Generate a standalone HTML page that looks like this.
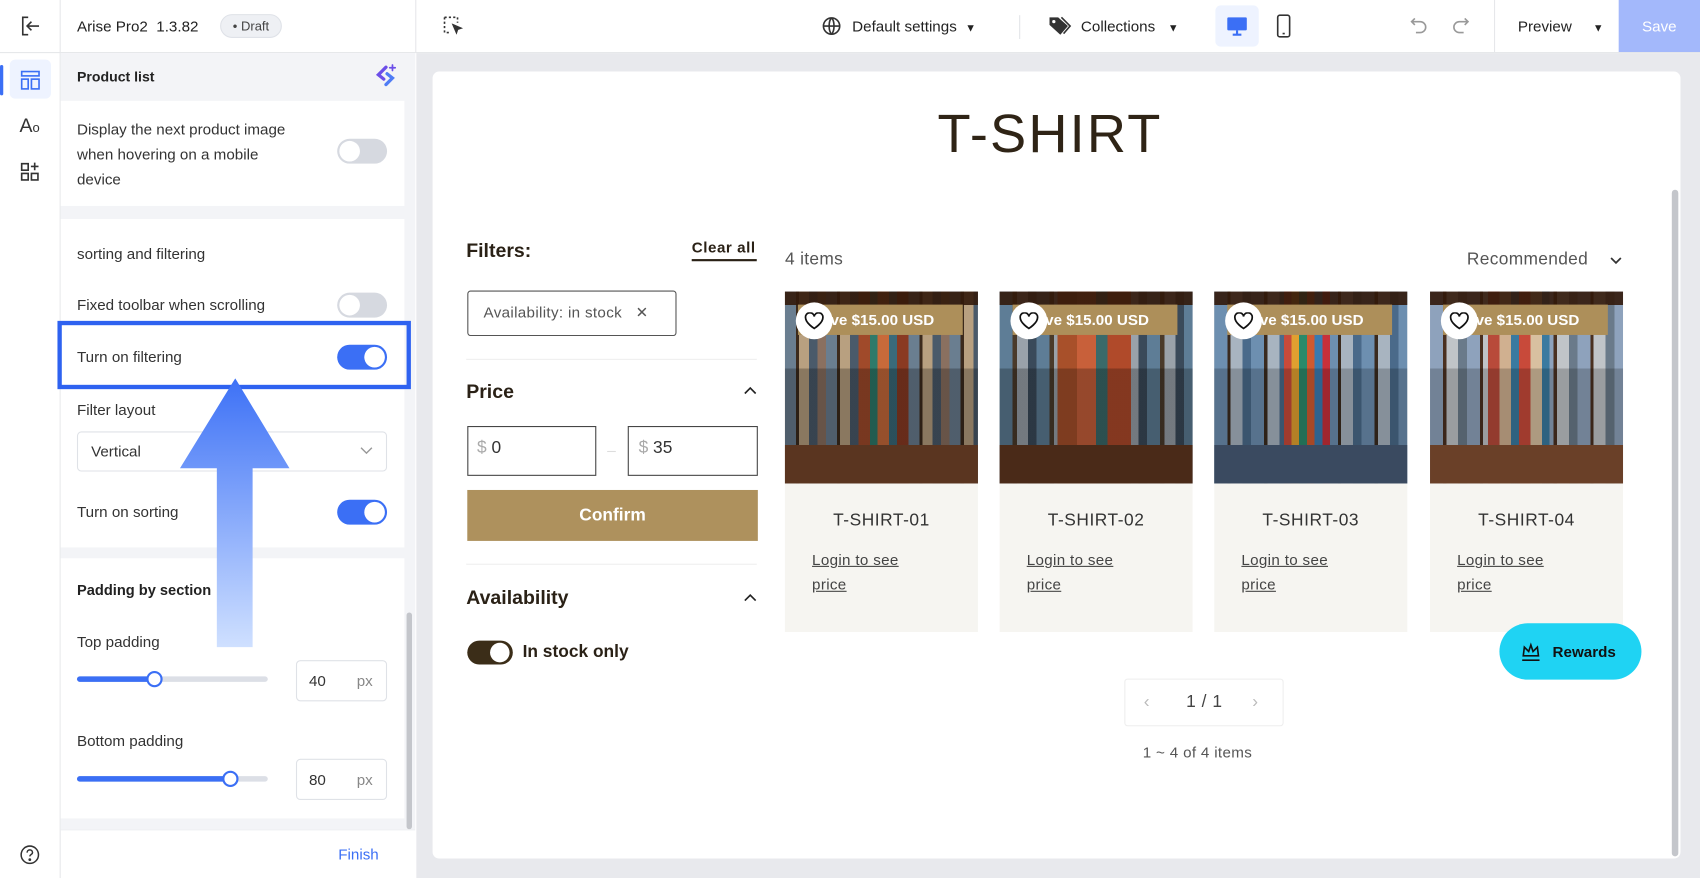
<!DOCTYPE html>
<html><head><meta charset="utf-8"><style>
*{box-sizing:border-box;margin:0;padding:0}
html,body{width:1700px;height:878px;overflow:hidden;background:#fff;font-family:"Liberation Sans",sans-serif}
#w{position:absolute;left:0;top:0;width:1568px;height:810px;transform:scale(1.08418,1.0840);transform-origin:0 0;background:#fff}
.a{position:absolute}
.t{position:absolute;white-space:nowrap;color:#2b2b2b;font-size:14px;line-height:1}
.tog{position:absolute;width:46px;height:23px;border-radius:12px;background:#d6d9e0}
.tog::after{content:"";position:absolute;left:2px;top:2px;width:19px;height:19px;border-radius:50%;background:#fff}
.tog.on{background:#3b6ff5}.tog.on::after{left:25px}
.card{position:absolute;background:#f6f5f1;width:178px;top:269px;height:314px}
.img{position:absolute;left:0;top:0;width:178px;height:177px}
.badge{position:absolute;left:12px;top:12px;width:152px;height:28px;background:#ad8f5a;color:#fff;font-weight:bold;font-size:14px;line-height:28px;padding-left:30px}
.heart{position:absolute;left:10px;top:10px;width:34px;height:34px;border-radius:50%;background:#fff}
.heart svg{position:absolute;left:8px;top:9px}
.ct{position:absolute;top:203px;width:178px;text-align:center;font-size:16px;color:#333;letter-spacing:.5px}
.lg{position:absolute;left:25px;top:236px;font-size:14px;color:#444;text-decoration:underline;line-height:23px;letter-spacing:.3px}
</style></head><body><div id="w">
<div class="a" style="left:0;top:48px;width:1568px;height:1px;background:#e6e7ea"></div>
<div class="a" style="left:55px;top:0;width:1px;height:810px;background:#e6e7ea"></div>
<div class="a" style="left:383px;top:0;width:1px;height:48px;background:#e6e7ea"></div>
<svg class="a" style="left:18px;top:14px" width="20" height="20" viewBox="0 0 20 20" fill="none" stroke="#333" stroke-width="1.5"><path d="M8 2H3v16h5M7 10h11M11 6l-4 4 4 4"/></svg>
<div class="t" style="left:71px;top:17px;font-size:14px;color:#222">Arise Pro2&nbsp; 1.3.82</div>
<div class="a" style="left:203px;top:13px;width:57px;height:22px;border-radius:11px;background:#eef0f4;border:1px solid #dfe2e8;font-size:12px;color:#444;line-height:20px;text-align:center">• Draft</div>
<svg class="a" style="left:408px;top:14px" width="20" height="20" viewBox="0 0 20 20" fill="none" stroke="#333" stroke-width="1.5"><path d="M2 2h12v5M2 2v14h5" stroke-dasharray="2 2"/><path d="M10 9l7 3-3 1-1 3z" fill="#333"/></svg>
<svg class="a" style="left:758px;top:15px" width="18" height="18" viewBox="0 0 18 18" fill="none" stroke="#333" stroke-width="1.5"><circle cx="9" cy="9" r="7.5"/><path d="M1.5 9h15M9 1.5c-3 3-3 12 0 15M9 1.5c3 3 3 12 0 15"/></svg>
<div class="t" style="left:786px;top:17px;font-size:14px;color:#222">Default settings&nbsp; <span style="font-size:10px">▼</span></div>
<div class="a" style="left:940px;top:14px;width:1px;height:22px;background:#e3e4e8"></div>
<svg class="a" style="left:967px;top:14px" width="22" height="20" viewBox="0 0 22 20"><path d="M1 2h8l9 8-7 8-10-9z" fill="#333"/><circle cx="5" cy="6" r="1.5" fill="#fff"/><path d="M12 2l8 8-6 7" fill="none" stroke="#333" stroke-width="1.5"/></svg>
<div class="t" style="left:997px;top:17px;font-size:14px;color:#222">Collections&nbsp;&nbsp; <span style="font-size:10px">▼</span></div>
<div class="a" style="left:1121px;top:5px;width:40px;height:38px;border-radius:5px;background:#eef3ff"></div>
<svg class="a" style="left:1131px;top:14px" width="20" height="20" viewBox="0 0 20 20"><rect x="1" y="2" width="18" height="12" rx="1" fill="#3b6ff5"/><path d="M10 14v3M6 18h8" stroke="#3b6ff5" stroke-width="2"/></svg>
<svg class="a" style="left:1177px;top:13px" width="14" height="22" viewBox="0 0 14 22" fill="none" stroke="#333" stroke-width="1.5"><rect x="1.5" y="1" width="11" height="20" rx="2"/><path d="M6 18h2"/></svg>
<svg class="a" style="left:1300px;top:15px" width="18" height="18" viewBox="0 0 18 18" fill="none" stroke="#999" stroke-width="1.5"><path d="M5 2L2 5l3 3M2 5h8a5 5 0 010 10H6"/></svg>
<svg class="a" style="left:1338px;top:15px" width="18" height="18" viewBox="0 0 18 18" fill="none" stroke="#999" stroke-width="1.5"><path d="M13 2l3 3-3 3M16 5H8a5 5 0 000 10h4"/></svg>
<div class="a" style="left:1378px;top:0;width:1px;height:48px;background:#e6e7ea"></div>
<div class="t" style="left:1400px;top:17px;font-size:14px;color:#222">Preview&nbsp;&nbsp;&nbsp;&nbsp; <span style="font-size:10px">▼</span></div>
<div class="a" style="left:1493px;top:0;width:75px;height:48px;background:#a3b8fb;color:#fff;font-size:14px;line-height:48px;text-align:center">Save</div>
<div class="a" style="left:0;top:60px;width:3px;height:28px;background:#3b6ff5;border-radius:2px"></div>
<div class="a" style="left:9px;top:55px;width:38px;height:36px;border-radius:5px;background:#eef3ff"></div>
<svg class="a" style="left:18px;top:64px" width="20" height="20" viewBox="0 0 20 20" fill="none" stroke="#3b6ff5" stroke-width="1.5"><rect x="2" y="2" width="16" height="4"/><rect x="2" y="9" width="6" height="9"/><rect x="11" y="9" width="7" height="9"/></svg>
<div class="t" style="left:18px;top:107px;font-size:18px;color:#333">A<span style="font-size:12px">o</span></div>
<svg class="a" style="left:18px;top:149px" width="20" height="20" viewBox="0 0 20 20" fill="none" stroke="#333" stroke-width="1.5"><rect x="2" y="2" width="6" height="6"/><rect x="2" y="11" width="6" height="6"/><rect x="11" y="11" width="6" height="6"/><path d="M14 1v7M10.5 4.5h7"/></svg>
<svg class="a" style="left:18px;top:779px" width="19" height="19" viewBox="0 0 19 19" fill="none" stroke="#333" stroke-width="1.4"><circle cx="9.5" cy="9.5" r="8"/><path d="M7 7.5a2.5 2.5 0 115 0c0 1.8-2.5 1.8-2.5 3.5"/><circle cx="9.5" cy="14" r=".6" fill="#333"/></svg>
<div class="a" style="left:56px;top:49px;width:327px;height:716px;background:#f3f4f7"></div>
<div class="t" style="left:71px;top:64px;font-size:13px;font-weight:bold;color:#222">Product list</div>
<svg class="a" style="left:344px;top:58px" width="24" height="24" viewBox="0 0 24 24" fill="none" stroke-width="3" stroke-linecap="round"><path d="M12 4L5 11l5 4" stroke="#6c4ee8"/><path d="M12 20l6-6-5-4" stroke="#4f7cf5"/><path d="M18 2v5M15.5 4.5h5" stroke="#6c4ee8" stroke-width="1.6"/></svg>
<div class="a" style="left:56px;top:93px;width:317px;height:97px;background:#fff"></div>
<div class="t" style="left:71px;top:108px;line-height:23px;color:#333">Display the next product image<br>when hovering on a mobile<br>device</div>
<div class="tog" style="left:311px;top:128px"></div>
<div class="a" style="left:56px;top:202px;width:317px;height:303px;background:#fff"></div>
<div class="t" style="left:71px;top:227px;color:#333">sorting and filtering</div>
<div class="t" style="left:71px;top:274px;color:#333">Fixed toolbar when scrolling</div>
<div class="tog" style="left:311px;top:270px"></div>
<div class="t" style="left:71px;top:322px;color:#333">Turn on filtering</div>
<div class="tog on" style="left:311px;top:318px"></div>
<div class="a" style="left:53px;top:296px;width:326px;height:63px;border:4px solid #2e62f0"></div>
<div class="t" style="left:71px;top:371px;color:#333">Filter layout</div>
<div class="a" style="left:71px;top:398px;width:286px;height:37px;border:1px solid #dfe2e7;border-radius:4px"></div>
<div class="t" style="left:84px;top:409px;color:#333">Vertical</div>
<svg class="a" style="left:332px;top:412px" width="12" height="8" viewBox="0 0 12 8" fill="none" stroke="#999" stroke-width="1.3"><path d="M1 1l5 5 5-5"/></svg>
<div class="t" style="left:71px;top:465px;color:#333">Turn on sorting</div>
<div class="tog on" style="left:311px;top:461px"></div>
<div class="a" style="left:56px;top:515px;width:317px;height:240px;background:#fff"></div>
<div class="t" style="left:71px;top:538px;color:#222;font-weight:bold;font-size:13.5px">Padding by section</div>
<div class="t" style="left:71px;top:585px;color:#333">Top padding</div>
<div class="a" style="left:71px;top:624px;width:176px;height:5px;border-radius:3px;background:#dcdfe6"></div>
<div class="a" style="left:71px;top:624px;width:71px;height:5px;border-radius:3px;background:#3b6ff5"></div>
<div class="a" style="left:135px;top:619px;width:15px;height:15px;border-radius:50%;background:#fff;border:2px solid #3b6ff5"></div>
<div class="a" style="left:273px;top:609px;width:84px;height:38px;border:1px solid #dfe2e7;border-radius:4px"></div>
<div class="t" style="left:285px;top:621px;color:#333">40</div><div class="t" style="left:329px;top:621px;color:#888">px</div>
<div class="t" style="left:71px;top:676px;color:#333">Bottom padding</div>
<div class="a" style="left:71px;top:716px;width:176px;height:5px;border-radius:3px;background:#dcdfe6"></div>
<div class="a" style="left:71px;top:716px;width:141px;height:5px;border-radius:3px;background:#3b6ff5"></div>
<div class="a" style="left:205px;top:711px;width:15px;height:15px;border-radius:50%;background:#fff;border:2px solid #3b6ff5"></div>
<div class="a" style="left:273px;top:700px;width:84px;height:38px;border:1px solid #dfe2e7;border-radius:4px"></div>
<div class="t" style="left:285px;top:712px;color:#333">80</div><div class="t" style="left:329px;top:712px;color:#888">px</div>
<div class="a" style="left:375px;top:565px;width:5px;height:200px;border-radius:3px;background:#c4c6cb"></div>
<div class="a" style="left:56px;top:765px;width:327px;height:1px;background:#eceef1"></div>
<div class="t" style="left:312px;top:781px;color:#3b6ff5;font-size:14px">Finish</div>
<svg class="a" style="left:166px;top:349px" width="102" height="250" viewBox="0 0 102 250"><defs><linearGradient id="g" x1="0" y1="0" x2="0" y2="1"><stop offset="0" stop-color="#3d71f6"/><stop offset="1" stop-color="#cfe0ff"/></linearGradient></defs><path d="M51 0L101 83H67V248H34V83H0z" fill="url(#g)"/></svg>
<div class="a" style="left:384px;top:49px;width:1184px;height:761px;background:#e8e9ed"></div>
<div class="a" style="left:399px;top:66px;width:1151px;height:726px;background:#fff;border-radius:6px"></div>
<div class="a" style="left:1542px;top:175px;width:6px;height:615px;border-radius:3px;background:#c4c6cb"></div>
<div class="t" style="left:0;width:1937px;text-align:center;top:98px;font-size:50px;color:#2f2416;letter-spacing:2px">T-SHIRT</div>
<div class="t" style="left:430px;top:222px;font-size:18px;font-weight:bold;color:#2a2116">Filters:</div>
<div class="t" style="left:638px;top:221px;font-size:14px;color:#2a2116;font-weight:bold;letter-spacing:.5px">Clear all</div>
<div class="a" style="left:638px;top:239px;width:60px;height:2px;background:#2a2116"></div>
<div class="a" style="left:431px;top:268px;width:193px;height:42px;border:1px solid #555;border-radius:3px"></div>
<div class="t" style="left:446px;top:281px;color:#555;font-size:14px;letter-spacing:.3px">Availability: in stock&nbsp;&nbsp; ✕</div>
<div class="a" style="left:430px;top:331px;width:268px;height:1px;background:#eee"></div>
<div class="t" style="left:430px;top:352px;font-size:18px;font-weight:bold;color:#2a2116">Price</div>
<svg class="a" style="left:686px;top:356px" width="12" height="8" viewBox="0 0 12 8" fill="none" stroke="#222" stroke-width="1.5"><path d="M1 7l5-5 5 5"/></svg>
<div class="a" style="left:431px;top:393px;width:119px;height:46px;border:1px solid #444"></div>
<div class="t" style="left:440px;top:406px;font-size:16px;color:#aaa">$ <span style="color:#333">0</span></div>
<div class="a" style="left:560px;top:416px;width:8px;height:1px;background:#ddd"></div>
<div class="a" style="left:579px;top:393px;width:120px;height:46px;border:1px solid #444"></div>
<div class="t" style="left:589px;top:406px;font-size:16px;color:#aaa">$ <span style="color:#333">35</span></div>
<div class="a" style="left:431px;top:452px;width:268px;height:47px;background:#ae915d;color:#fff;font-weight:bold;font-size:16px;line-height:47px;text-align:center">Confirm</div>
<div class="a" style="left:430px;top:520px;width:268px;height:1px;background:#eee"></div>
<div class="t" style="left:430px;top:542px;font-size:18px;font-weight:bold;color:#2a2116">Availability</div>
<svg class="a" style="left:686px;top:547px" width="12" height="8" viewBox="0 0 12 8" fill="none" stroke="#222" stroke-width="1.5"><path d="M1 7l5-5 5 5"/></svg>
<div class="a" style="left:431px;top:591px;width:42px;height:22px;border-radius:11px;background:#3b2d18"></div>
<div class="a" style="left:452px;top:593px;width:18px;height:18px;border-radius:50%;background:#fff"></div>
<div class="t" style="left:482px;top:594px;font-size:16px;font-weight:bold;color:#2a2116">In stock only</div>
<div class="t" style="left:724px;top:232px;font-size:16px;color:#555;letter-spacing:.3px">4 items</div>
<div class="t" style="left:1353px;top:232px;font-size:16px;color:#555;letter-spacing:.3px">Recommended</div>
<svg class="a" style="left:1485px;top:237px" width="11" height="7" viewBox="0 0 11 7" fill="none" stroke="#333" stroke-width="1.6"><path d="M1 1l4.5 4.5L10 1"/></svg>

<div class="card" style="left:724px"><div class="img" style="background:linear-gradient(180deg,rgba(50,25,10,.9) 0 7%,transparent 7% 40%,rgba(0,0,0,.25) 40% 80%,#5a3520 80%),linear-gradient(90deg,transparent 0 38%,#a04a2a 38% 44%,#2f7a6a 44% 48%,#c86a3a 48% 54%,#3a6a7a 54% 58%,#8a3a22 58% 64%,transparent 64%),repeating-linear-gradient(90deg,#6a7e90 0 10px,#3c2a1c 10px 13px,#b8a080 13px 22px,#4a5a6a 22px 30px,#8a7060 30px 38px)"></div><div class="badge">ve $15.00 USD</div><div class="heart"><svg width="18" height="16" viewBox="0 0 18 16" fill="none" stroke="#111" stroke-width="1.6"><path d="M9 15S1 10 1 5a4 4 0 018-1 4 4 0 018 1c0 5-8 10-8 10z"/></svg></div><div class="ct">T-SHIRT-01</div><div class="lg">Login to see<br>price</div></div>
<div class="card" style="left:922px"><div class="img" style="background:linear-gradient(180deg,rgba(50,25,10,.9) 0 7%,transparent 7% 40%,rgba(0,0,0,.25) 40% 80%,#4a2a18 80%),linear-gradient(90deg,transparent 0 30%,#a8502a 30% 40%,#c8603a 40% 50%,#3a6a6a 50% 56%,#b04a2a 56% 68%,transparent 68%),repeating-linear-gradient(90deg,#5e7d96 0 12px,#4a3a2a 12px 16px,#9aa2aa 16px 26px,#3a4a5a 26px 34px)"></div><div class="badge">ve $15.00 USD</div><div class="heart"><svg width="18" height="16" viewBox="0 0 18 16" fill="none" stroke="#111" stroke-width="1.6"><path d="M9 15S1 10 1 5a4 4 0 018-1 4 4 0 018 1c0 5-8 10-8 10z"/></svg></div><div class="ct">T-SHIRT-02</div><div class="lg">Login to see<br>price</div></div>
<div class="card" style="left:1120px"><div class="img" style="background:linear-gradient(180deg,rgba(50,25,10,.9) 0 7%,transparent 7% 40%,rgba(0,0,0,.2) 40% 80%,#3a4a60 80%),linear-gradient(90deg,transparent 0 36%,#c84a3a 36% 40%,#e0a030 40% 44%,#2a8a6a 44% 48%,#d05a30 48% 52%,#3a7ab0 52% 56%,#c8303a 56% 60%,transparent 60%),repeating-linear-gradient(90deg,#6d8fb0 0 12px,#3a2a1e 12px 15px,#a8b4c0 15px 26px,#4a6a8a 26px 34px)"></div><div class="badge">ve $15.00 USD</div><div class="heart"><svg width="18" height="16" viewBox="0 0 18 16" fill="none" stroke="#111" stroke-width="1.6"><path d="M9 15S1 10 1 5a4 4 0 018-1 4 4 0 018 1c0 5-8 10-8 10z"/></svg></div><div class="ct">T-SHIRT-03</div><div class="lg">Login to see<br>price</div></div>
<div class="card" style="left:1319px"><div class="img" style="background:linear-gradient(180deg,rgba(50,25,10,.9) 0 7%,transparent 7% 40%,rgba(0,0,0,.2) 40% 80%,#6a4028 80%),linear-gradient(90deg,transparent 0 30%,#b84a3a 30% 36%,#d0b090 36% 42%,#3a7aa0 42% 46%,#c84a3a 46% 52%,#d8c0a0 52% 58%,#3a7aa0 58% 62%,transparent 62%),repeating-linear-gradient(90deg,#8ea2bc 0 12px,#4a3020 12px 15px,#c0c4c8 15px 26px,#6a7a8a 26px 34px)"></div><div class="badge">ve $15.00 USD</div><div class="heart"><svg width="18" height="16" viewBox="0 0 18 16" fill="none" stroke="#111" stroke-width="1.6"><path d="M9 15S1 10 1 5a4 4 0 018-1 4 4 0 018 1c0 5-8 10-8 10z"/></svg></div><div class="ct">T-SHIRT-04</div><div class="lg">Login to see<br>price</div></div>

<div class="a" style="left:1383px;top:575px;width:131px;height:52px;border-radius:26px;background:#1fd3f3"></div>
<svg class="a" style="left:1402px;top:591px" width="20" height="20" viewBox="0 0 20 20" fill="none" stroke="#111" stroke-width="1.5"><path d="M3 14l1-8 4 4 2-6 2 6 4-4 1 8zM2 18h16"/></svg>
<div class="t" style="left:1432px;top:594px;font-size:14px;font-weight:bold;color:#111">Rewards</div>
<div class="a" style="left:1037px;top:626px;width:147px;height:44px;border:1px solid #eee;border-radius:3px"></div>
<div class="t" style="left:1055px;top:640px;font-size:16px;color:#bbb">‹</div>
<div class="t" style="left:1094px;top:640px;font-size:16px;color:#444;letter-spacing:.5px">1 / 1</div>
<div class="t" style="left:1155px;top:640px;font-size:16px;color:#bbb">›</div>
<div class="t" style="left:1054px;top:687px;font-size:14px;color:#555;letter-spacing:.3px">1 ~ 4 of 4 items</div>
</div></body></html>
